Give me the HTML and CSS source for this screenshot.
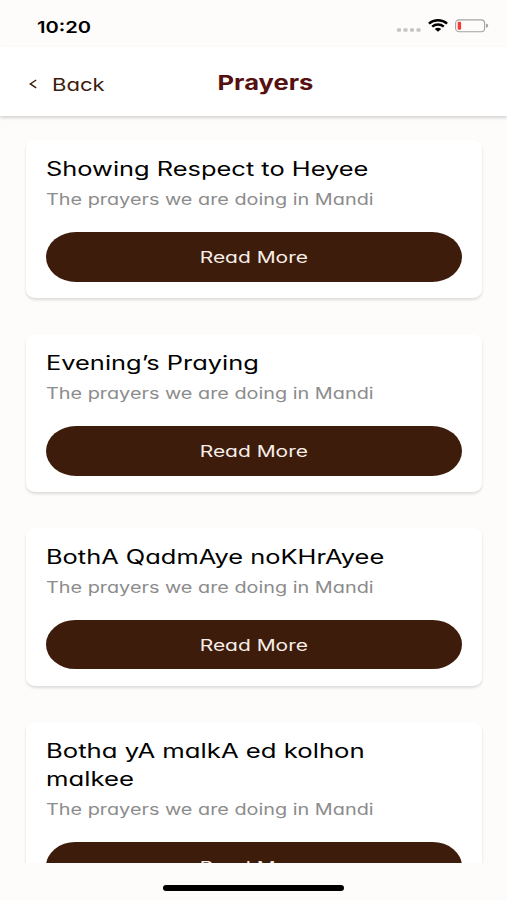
FILE: index.html
```
<!DOCTYPE html>
<html lang="en">
<head>
  <meta charset="UTF-8" />
  <meta name="viewport" content="width=device-width, initial-scale=1.0"/>
  <title>Prayers</title>
  <link rel="stylesheet" href="styles.css">
</head>
<body>
  <div class="status-bar">
    <span class="time"><span class="wide">10:20</span></span>
    <div class="status-icons">
      <svg class="signal" width="24" height="4" viewBox="0 0 24 4" fill="#c5c4c3">
        <rect x="0" y="0.3" width="4" height="3.4" rx="1"/>
        <rect x="6.5" y="0.3" width="4" height="3.4" rx="1"/>
        <rect x="13" y="0.3" width="4" height="3.4" rx="1"/>
        <rect x="19.5" y="0.3" width="4" height="3.4" rx="1"/>
      </svg>
      <svg class="wifi" width="20" height="13" viewBox="0 0 20 13" fill="none" stroke="#000" stroke-width="2.4">
        <path d="M0.9 4.6C6 0.2 14 0.2 19.1 4.6"/>
        <path d="M4.2 7.7C7.5 4.8 12.5 4.8 15.8 7.7"/>
        <path d="M6.8 10Q10 7.6 13.2 10L10 12.7Z" fill="#000" stroke="none"/>
      </svg>
      <svg class="battery" width="34" height="14" viewBox="0 0 34 14">
        <rect x="0.6" y="0.9" width="29" height="11.8" rx="3.5" fill="none" stroke="#a3a2a1" stroke-width="1.1"/>
        <rect x="2.7" y="2.8" width="3.4" height="8" rx="1.3" fill="#f8393a"/>
        <path d="M31 4.6Q33.2 5.2 33.2 6.8T31 9Z" fill="#a3a2a1"/>
      </svg>
    </div>
  </div>

  <header>
    <a class="back" href="#">
      <svg width="8" height="10" viewBox="0 0 8 10" fill="none" stroke="#3d1c0b" stroke-width="1.4"><path d="M7.2 1L1.3 4.9L7.2 8.8"/></svg>
      <span class="wide">Back</span>
    </a>
    <h1><span class="wide">Prayers</span></h1>
  </header>

  <main class="list">
    <div class="card">
      <h2><span class="wide">Showing Respect to Heyee</span></h2>
      <p><span class="wide">The prayers we are doing in Mandi</span></p>
      <button class="btn"><span class="wide">Read More</span></button>
    </div>
    <div class="card">
      <h2><span class="wide">Evening’s Praying</span></h2>
      <p><span class="wide">The prayers we are doing in Mandi</span></p>
      <button class="btn"><span class="wide">Read More</span></button>
    </div>
    <div class="card">
      <h2><span class="wide">BothA QadmAye noKHrAyee</span></h2>
      <p><span class="wide">The prayers we are doing in Mandi</span></p>
      <button class="btn"><span class="wide">Read More</span></button>
    </div>
    <div class="card">
      <h2><span class="wide wider">Botha yA malkA ed kolhon<br>malkee</span></h2>
      <p><span class="wide">The prayers we are doing in Mandi</span></p>
      <button class="btn"><span class="wide">Read More</span></button>
    </div>
  </main>

  <footer>
    <div class="home-bar"></div>
  </footer>
</body>
</html>
```
FILE: styles.css
```
* {
  box-sizing: border-box;
}
body {
  font-family: Inter, "Open Sans", sans-serif;
  background: #fdfcfa;
  color: #000;
  margin: 0;
  height: 900px;
  display: flex;
  flex-direction: column;
  overflow: hidden;
}
/* stretched lettering */
.wide {
  display: inline-block;
  white-space: nowrap;
  transform: scaleX(1.303);
  transform-origin: left center;
}
.wider {
  transform: scaleX(1.317);
}
.status-bar {
  height: 47px;
  flex: none;
  display: flex;
  justify-content: space-between;
  padding: 16px 18px 0 37px;
}
.time {
  font-size: 16.5px;
  font-weight: 600;
  line-height: 22px;
}
.time .wide {
  transform: scaleX(1.22);
}
.status-icons {
  display: flex;
  align-items: flex-start;
  padding-top: 3px;
}
.signal {
  margin: 9px 7px 0 0;
}
.wifi {
  margin-right: 7px;
}
header {
  height: 69px;
  flex: none;
  background: #fff;
  display: grid;
  grid-template-columns: 1fr auto 1fr;
  align-items: center;
  padding: 0 17px 0 29px;
  box-shadow: 0 2px 3px rgba(0, 0, 0, 0.16);
  z-index: 1;
}
.back {
  display: flex;
  align-items: center;
  gap: 15px;
  padding-top: 5px;
  color: #3d1c0b;
  text-decoration: none;
  font-size: 17.5px;
  font-feature-settings: "cv11" 1;
}
.back .wide {
  transform: scaleX(1.26);
}
h1 {
  margin: 2px 0 0;
  color: #561010;
  font-size: 20.5px;
  font-weight: 700;
}
h1 .wide {
  transform: scaleX(1.245);
  transform-origin: center;
  margin-left: 12px;
}
.list {
  flex: none;
  height: 746.5px;
  padding: 24.4px 25px 0 26px;
  display: flex;
  flex-direction: column;
  gap: 35.8px;
  overflow: hidden;
  font-feature-settings: "cv11" 1;
}
.card {
  flex: none;
  background: #fff;
  border-radius: 10px / 8px;
  padding: 15px 20px 16.5px;
  box-shadow: 0 2px 3px rgba(0, 0, 0, 0.13);
}
h2 {
  margin: 0;
  font-size: 19.5px;
  font-weight: 400;
  line-height: 28px;
}
p {
  margin: 4px 0 20px;
  color: #8c8c8c;
  font-size: 15.5px;
  line-height: 25px;
}
p .wide {
  transform: scaleX(1.28);
}
.btn {
  display: block;
  width: 100%;
  height: 49.5px;
  padding: 0;
  border: none;
  border-radius: 30px / 25px;
  background: #3d1c0b;
  color: #f8eee8;
  font-family: inherit;
  font-size: 16px;
  font-feature-settings: inherit;
  cursor: pointer;
}
.btn .wide {
  transform: translateX(-0.5px) scaleX(1.31);
  transform-origin: center;
}
footer {
  flex: 1;
  display: flex;
  justify-content: center;
  padding-top: 22.5px;
}
.home-bar {
  width: 181px;
  height: 6px;
  border-radius: 3px;
  background: #000;
}
```
